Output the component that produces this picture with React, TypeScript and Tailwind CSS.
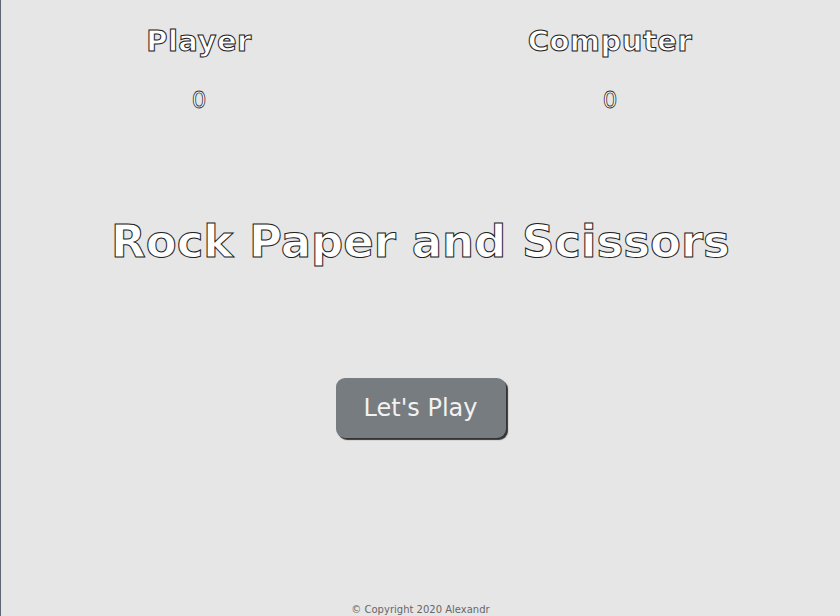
import React from 'react';

const outline = '[-webkit-text-stroke:1px_#222] text-white';

const Score: React.FC<{ label: string; value: number }> = ({ label, value }) => (
    <div className="w-[220px] flex flex-col items-center">
        <h2 className={`text-[29px] font-bold leading-[36px] tracking-[0.5px] ${outline}`}>{label}</h2>
        <p className={`mt-[27px] text-[23px] leading-[28px] [-webkit-text-stroke:0.8px_#333] text-white`}>{value}</p>
    </div>
);

export default function App() {
    return (
        <div className="min-h-[616px] h-[616px] overflow-hidden bg-[#e6e6e6] border-l border-[#5f6673] font-['DejaVu_Sans',sans-serif] flex flex-col">
            {/* Scoreboard */}
            <div className="flex pl-[88px] gap-[191px] pt-[23px]">
                <Score label="Player" value={0} />
                <Score label="Computer" value={0} />
            </div>

            <h1 className={`mt-[98px] text-center text-[45px] font-bold leading-[60px] ${outline}`}>
                Rock Paper and Scissors
            </h1>

            <div className="mt-[106px] flex justify-center">
                <button className="w-[170px] h-[60px] rounded-[9px] bg-[#777c80] text-[#f2f2f2] text-[24px] shadow-[2px_2px_1px_#333]">
                    Let's Play
                </button>
            </div>

            <footer className="mt-auto text-center text-[10px] leading-[12px] text-[#666]">
                © Copyright 2020 Alexandr
            </footer>
        </div>
    );
}
